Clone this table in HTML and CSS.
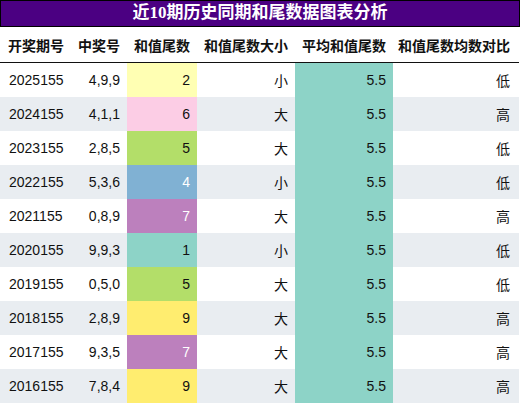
FILE: index.html
```html
<!DOCTYPE html>
<html>
<head>
<meta charset="utf-8">
<link rel="stylesheet" href="styles.css">
</head>
<body>
<div class="wrap">
  <div class="title">近10期历史同期和尾数据图表分析</div>
  <div class="row head">
    <div class="c c1">开奖期号</div>
    <div class="c c2">中奖号</div>
    <div class="c c3">和值尾数</div>
    <div class="c c4">和值尾数大小</div>
    <div class="c c5">平均和值尾数</div>
    <div class="c c6">和值尾数均数对比</div>
  </div>
  <div class="row">
    <div class="c c1">2025155</div><div class="c c2">4,9,9</div><div class="c c3 v2">2</div><div class="c c4">小</div><div class="c c5 avg">5.5</div><div class="c c6">低</div>
  </div>
  <div class="row alt">
    <div class="c c1">2024155</div><div class="c c2">4,1,1</div><div class="c c3 v6">6</div><div class="c c4">大</div><div class="c c5 avg">5.5</div><div class="c c6">高</div>
  </div>
  <div class="row">
    <div class="c c1">2023155</div><div class="c c2">2,8,5</div><div class="c c3 v5">5</div><div class="c c4">大</div><div class="c c5 avg">5.5</div><div class="c c6">低</div>
  </div>
  <div class="row alt">
    <div class="c c1">2022155</div><div class="c c2">5,3,6</div><div class="c c3 v4">4</div><div class="c c4">小</div><div class="c c5 avg">5.5</div><div class="c c6">低</div>
  </div>
  <div class="row">
    <div class="c c1">2021155</div><div class="c c2">0,8,9</div><div class="c c3 v7">7</div><div class="c c4">大</div><div class="c c5 avg">5.5</div><div class="c c6">高</div>
  </div>
  <div class="row alt">
    <div class="c c1">2020155</div><div class="c c2">9,9,3</div><div class="c c3 v1">1</div><div class="c c4">小</div><div class="c c5 avg">5.5</div><div class="c c6">低</div>
  </div>
  <div class="row">
    <div class="c c1">2019155</div><div class="c c2">0,5,0</div><div class="c c3 v5">5</div><div class="c c4">大</div><div class="c c5 avg">5.5</div><div class="c c6">低</div>
  </div>
  <div class="row alt">
    <div class="c c1">2018155</div><div class="c c2">2,8,9</div><div class="c c3 v9">9</div><div class="c c4">大</div><div class="c c5 avg">5.5</div><div class="c c6">高</div>
  </div>
  <div class="row">
    <div class="c c1">2017155</div><div class="c c2">9,3,5</div><div class="c c3 v7">7</div><div class="c c4">大</div><div class="c c5 avg">5.5</div><div class="c c6">高</div>
  </div>
  <div class="row alt">
    <div class="c c1">2016155</div><div class="c c2">7,8,4</div><div class="c c3 v9">9</div><div class="c c4">大</div><div class="c c5 avg">5.5</div><div class="c c6">高</div>
  </div>
</div>
</body>
</html>
```
FILE: styles.css
```css
html, body {
  margin: 0;
  padding: 0;
  background: #ffffff;
}
.wrap {
  width: 520px;
  font-family: "Liberation Sans", "Noto Sans CJK SC", sans-serif;
  font-size: 14px;
  color: #111111;
}
.title {
  box-sizing: border-box;
  height: 27px;
  background: #4b0082;
  border: 1px solid #000000;
  color: #ffffff;
  font-family: "Liberation Serif", "Noto Sans CJK SC", serif;
  font-weight: bold;
  font-size: 17px;
  line-height: 24px;
  text-align: center;
}
.row {
  display: flex;
  width: 519px;
  height: 34px;
}
.row.head {
  height: 35px;
  border-bottom: 1px solid #111111;
  font-weight: bold;
}
.row.alt {
  background: #e9edf1;
}
.c {
  box-sizing: border-box;
  display: flex;
  align-items: center;
  justify-content: flex-end;
  padding: 0 7px;
  white-space: nowrap;
}
.c1 { width: 77px; justify-content: flex-start; padding-left: 9px; }
.c2 { width: 50px; }
.c3 { width: 70px; }
.c4 { width: 98px; }
.c5 { width: 98px; }
.c6 { width: 126px; padding-right: 9px; }
.head .c1 { padding-left: 8px; }
.avg { background: #8dd3c7; }
.head .avg { background: transparent; }
.v1 { background: #8dd3c7; }
.v2 { background: #ffffb3; }
.v4 { background: #80b1d3; color: #ffffff; }
.v5 { background: #b3de69; }
.v6 { background: #fccde5; }
.v7 { background: #bc80bd; color: #ffffff; }
.v9 { background: #ffed6f; }
```
